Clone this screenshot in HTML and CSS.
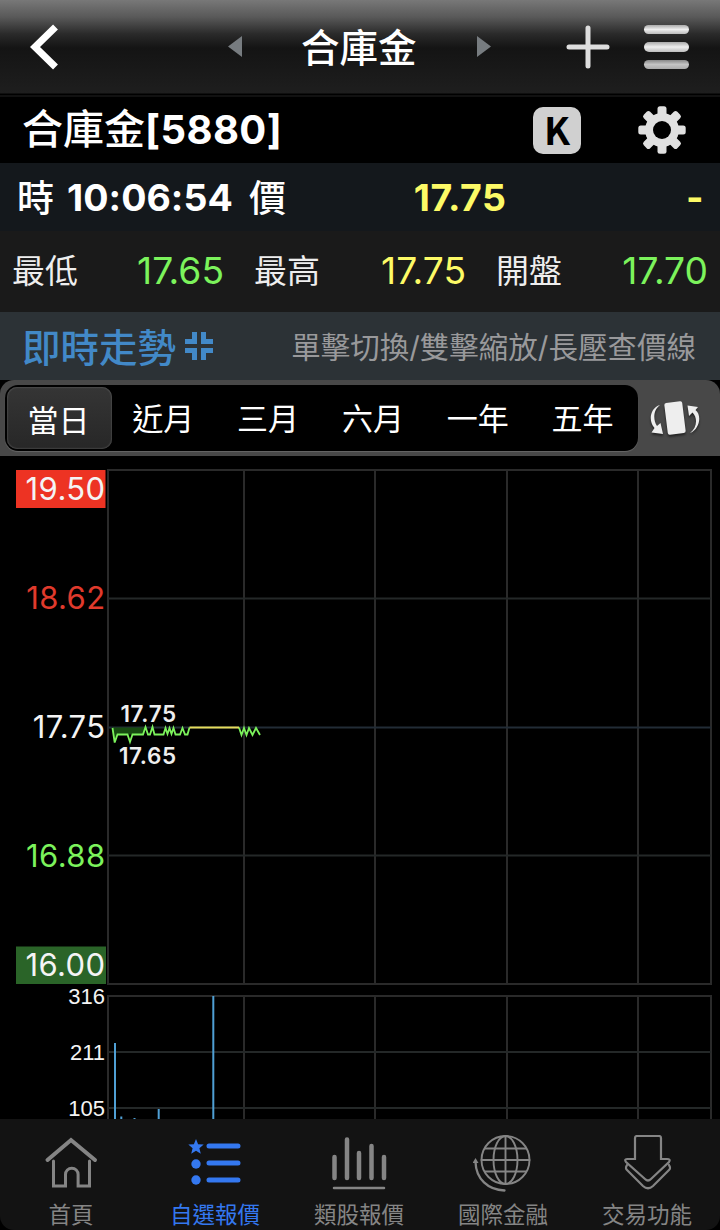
FILE: index.html
```html
<!DOCTYPE html>
<html lang="zh-TW">
  <head>
    <meta charset="UTF-8" />
    <meta name="viewport" content="width=device-width, initial-scale=1.0" />
    <title>合庫金 5880</title>
    <link rel="stylesheet" href="styles.css">
  </head>
  <body>
    <!-- 標題列 -->
    <header class="topbar">
      <svg class="back" width="30" height="46" viewBox="0 0 30 46"><path d="M25.500 3L5 23l20.500 20" /></svg>
      <svg class="arrow arrow-prev" width="14" height="22" viewBox="0 0 14 22"><path d="M14 0v21L0 10.500z" /></svg>
      <h1>合庫金</h1>
      <svg class="arrow arrow-next" width="14" height="22" viewBox="0 0 14 22"><path d="M0 0v21l14-10.500z" /></svg>
      <svg class="plus" width="44" height="44" viewBox="0 0 44 44"><path d="M22 3v38M3 22h38" /></svg>
      <div class="menu"><i></i><i></i><i></i></div>
    </header>

    <!-- 股票名稱 -->
    <div class="stock">
      <h2>合庫金<b>[5880]</b></h2>
      <span class="k-badge">K</span>
      <svg class="gear" width="48" height="48" viewBox="-24 -24 48 48">
        <rect x="-4.500" y="-23.700" width="9" height="47.400" rx="2.500" />
        <rect x="-4.500" y="-23.700" width="9" height="47.400" rx="2.500" transform="rotate(45)" />
        <rect x="-4.500" y="-23.700" width="9" height="47.400" rx="2.500" transform="rotate(90)" />
        <rect x="-4.500" y="-23.700" width="9" height="47.400" rx="2.500" transform="rotate(135)" />
        <circle r="17" />
        <circle class="hole" r="9" />
      </svg>
    </div>

    <!-- 時間與成交價 -->
    <div class="quote">
      <span class="label">時</span>
      <span class="time">10:06:54</span>
      <span class="label">價</span>
      <span class="price">17.75</span>
      <span class="diff">-</span>
    </div>

    <div class="range">
      <span>最低</span><b class="green">17.65</b>
      <span>最高</span><b class="yellow">17.75</b>
      <span>開盤</span><b class="green">17.70</b>
    </div>

    <div class="trend">
      <h3>即時走勢</h3>
      <svg class="shrink" width="28" height="28" viewBox="0 0 28 28"><path d="M9.500 0v9.500H0M18.500 0v9.500H28M9.500 28v-9.500H0M18.500 28v-9.500H28" /></svg>
      <p>單擊切換/雙擊縮放/長壓查價線</p>
    </div>

    <!-- 期間切換 -->
    <div class="period">
      <div class="tabs">
        <span class="tab active">當日</span>
        <span class="tab">近月</span>
        <span class="tab">三月</span>
        <span class="tab">六月</span>
        <span class="tab">一年</span>
        <span class="tab">五年</span>
      </div>
      <svg class="rotate" width="52" height="40" viewBox="0 0 52 40">
        <rect x="17" y="4" width="18" height="32" rx="2" transform="rotate(-7 26 20)" />
        <path d="M11 7C1 10-1 23 5.500 30L2.500 34.500 14 36 11.500 25 8 28C4 22 4 12 11 7z" />
        <path d="M41 35C51 31 53 17 46.500 12L49 9 38.500 7.500 40 18 43.500 14.500C49 20 48 30 41 35z" />
      </svg>
    </div>

    <!-- 走勢圖與成交量 -->
    <svg class="chart" width="720" height="663" viewBox="0 456 720 663">
      <g class="grid">
        <path d="M108 470H711V984H108z" />
        <path d="M244 470v514M375 470v514M507 470v514M638 470v514" />
        <path class="thin" d="M108 598.500h603M108 855.500h603" />
        <path d="M108 1119V996H711v123" />
        <path d="M244 996v123M375 996v123M507 996v123M638 996v123" />
        <path class="thin" d="M108 1052h603M108 1108h603" />
      </g>
      <path class="base" d="M108 727.500H711" />

      <path class="area" d="M112 727.500L114.500 742 117 734.500H144l2-7z" />
      <path class="line" d="M112.500 728L114.700 742.500 117.500 734.500H127.500L130 742 132.500 734.500H143L145.500 727 148 734.500H150L152.500 727 154.500 734.500H163.500L165.500 728 167.500 734 169.500 728 171.500 734 173.500 728 175.500 734.500H180L182.500 728 185 734.500H187.500L189.500 727.500M239 727.500L241.500 735 244 728 246.500 735 249 728 252.500 735 256 728 260 735" />
      <path class="flat" d="M189.500 727.500H239" />

      <path class="bar" d="M115 1119V1043M158.700 1119V1109M213.300 1119V996M121.300 1119v-2.500M134.500 1119v-1" />

      <rect class="limit-up" x="16" y="470" width="89.500" height="38" />
      <rect class="limit-down" x="16" y="946.500" width="90" height="37.500" />
      <g class="axis">
        <text x="105.500" y="500">19.50</text>
        <text class="red" x="105.500" y="609">18.62</text>
        <text x="105.500" y="738">17.75</text>
        <text class="green" x="105.500" y="867">16.88</text>
        <text x="105.500" y="976">16.00</text>
      </g>
      <g class="axis volume-axis">
        <text x="105" y="1004">316</text>
        <text x="105" y="1060">211</text>
        <text x="105" y="1116">105</text>
      </g>
      <g class="mark">
        <text x="120.500" y="722">17.75</text>
        <text x="119" y="763.500">17.65</text>
      </g>
    </svg>

    <!-- 底部選單 -->
    <nav class="nav">
      <a class="item">
        <svg width="60" height="60" viewBox="0 0 60 60"><path d="M6.500 25L30 5l24 20" stroke-width="4" /><path d="M12.500 26v25h12V39.500a6.300 6.300 0 0 1 12.600 0V51H48.500V26" /></svg>
        <span>首頁</span>
      </a>
      <a class="item active">
        <svg width="60" height="60" viewBox="1.500 0 60 60">
          <path class="fill" d="M12.500 4l2.100 5.200 5.600.4-4.300 3.600 1.400 5.500-4.800-3-4.800 3 1.400-5.500L4.800 9.600l5.600-.4z" />
          <circle class="fill" cx="12.500" cy="29" r="4.700" /><circle class="fill" cx="12.500" cy="45" r="4.700" />
          <path stroke-width="5" d="M25.500 11h29M25.500 28h29M25.500 45h29" />
        </svg>
        <span>自選報價</span>
      </a>
      <a class="item">
        <svg width="60" height="60" viewBox="0 0 60 60"><path stroke-width="4.500" d="M5.500 22v21M18 4.500V43M30 18v25M42.500 11v32M55 22v21" /><path stroke-width="2.500" d="M5 53h50" /></svg>
        <span>類股報價</span>
      </a>
      <a class="item">
        <svg width="60" height="60" viewBox="0 0 60 60">
          <g stroke-width="1.900"><circle cx="32.500" cy="25" r="24" /><ellipse cx="32.500" cy="25" rx="12" ry="24" /><path d="M32.500 1v48M8.500 25h48M12 13.500h41M12 36.500h41" /></g>
          <path d="M2.500 27C3 44 15 55 31.500 55.500" stroke-width="2.300" /><path class="fill" d="M2.500 23l3 5h-6z" />
        </svg>
        <span>國際金融</span>
      </a>
      <a class="item">
        <svg width="60" height="60" viewBox="0 0 60 60"><path stroke-width="2.200" d="M20 1H42q2 0 2 2V24h6q4 0 2 3L34 44q-3 3-6 0L9 27q-2-3 1-3h8V3q0-2 2-2z" /><path stroke-width="2.200" d="M10 30q-2 3 0 5l16 16q5 4.500 10 0l16-16q2-2 0-5" /></svg>
        <span>交易功能</span>
      </a>
    </nav>
  </body>
</html>
```
FILE: styles.css
```css
* {
  box-sizing: border-box;
}
body {
  margin: 0;
  width: 720px;
  height: 1230px;
  overflow: hidden;
  background-color: #000;
  color: #fff;
  font-family: Inter, "Noto Sans CJK TC", sans-serif;
}
h1,
h2,
h3,
p {
  margin: 0;
  white-space: nowrap;
}
svg {
  display: block;
  flex: none;
}

/* 標題列 */
.topbar {
  display: flex;
  align-items: center;
  height: 97px;
  padding: 0 31px 3px 30px;
  background: linear-gradient(#787878 0, #595959 17px, #2a2a2a 34px, #141414 48px, #1e1e1e 93px, #000 94px, #000 95px, #222 96px, #000 97px);
}
.back path {
  fill: none;
  stroke: #fff;
  stroke-width: 7;
}
.arrow path {
  fill: #777c80;
}
.arrow-prev {
  margin-left: 168px;
}
.topbar h1 {
  width: 120px;
  margin: 0 56px 0 59px;
  padding-top: 1px;
  font-size: 38.500px;
  font-weight: 500;
  line-height: 60px;
}
.plus {
  margin-left: 75px;
}
.plus path {
  stroke: #dedede;
  stroke-width: 5;
  stroke-linecap: round;
}
.menu {
  display: flex;
  flex-direction: column;
  gap: 8px;
  width: 45px;
  margin-left: auto;
}
.menu i {
  height: 9.500px;
  border-radius: 5px;
  background: linear-gradient(#aaa, #eee 50%, #bbb);
}
.menu i:last-child {
  background: linear-gradient(#888, #c4c4c4 50%, #aaa);
}

/* 股票名稱 */
.stock {
  display: flex;
  align-items: center;
  height: 66px;
  padding: 0 34px 0 22px;
}
.stock h2 {
  width: 511px;
  padding-bottom: 8px;
  font-size: 41px;
  font-weight: 500;
}
.stock b {
  font-size: 40px;
  font-weight: 650;
  letter-spacing: 0.400px;
}
.k-badge {
  width: 48px;
  height: 47px;
  border-radius: 10px;
  background-color: #d0d0d0;
  color: #000;
  font: bold 38px/44px "Noto Sans CJK TC", sans-serif;
  text-align: center;
}
.gear {
  margin-left: auto;
  fill: #e0e0e0;
}
.gear .hole {
  fill: #000;
}

/* 時間與成交價 */
.quote {
  display: flex;
  align-items: center;
  height: 68px;
  padding: 0 16px 0 17px;
  background-color: #14181c;
  font-size: 37.500px;
  font-weight: 650;
  letter-spacing: 0.500px;
}
.quote .label {
  width: 50px;
  padding-bottom: 2px;
  font-size: 37px;
  font-weight: 500;
  letter-spacing: 0;
}
.quote .time {
  width: 182px;
  letter-spacing: 0.050px;
}
.quote .price {
  width: 207.500px;
  text-align: right;
}
.price,
.diff,
.yellow {
  color: #fdfa66;
}
.diff {
  margin-left: auto;
}
.range {
  display: flex;
  align-items: center;
  height: 81px;
  padding: 0 12px 3px;
  background-color: #1a1a1a;
}
.range span {
  width: 70px;
  padding-bottom: 2px;
  font-size: 33px;
  color: #eee;
}
.range b {
  width: 142px;
  margin-right: 30px;
  font-size: 37.200px;
  font-weight: 400;
  text-align: right;
}
.range b:last-child {
  margin-right: 0;
}
.green {
  color: #7cf35c;
}

.trend {
  display: flex;
  align-items: center;
  height: 68px;
  padding: 0 24px 0 22px;
  background-color: #2c3236;
}
.trend h3 {
  padding-bottom: 3px;
  font-size: 38.500px;
  font-weight: 500;
  color: #4289c8;
}
.shrink {
  margin-left: 9px;
}
.shrink path {
  fill: none;
  stroke: #4289c8;
  stroke-width: 5;
}
.trend p {
  margin-left: auto;
  padding-bottom: 3px;
  font-size: 29.500px;
  color: #99999b;
}

/* 期間切換 */
.period {
  display: flex;
  align-items: center;
  height: 76px;
  padding: 0 19px 0 5px;
  border-radius: 14px 14px 0 0;
  background-color: #484848;
}
.tabs {
  display: flex;
  width: 633px;
  height: 66px;
  padding: 2px;
  border-radius: 13px;
  background-color: #000;
  box-shadow: 0 1px 1px #666;
}
.tab {
  width: 105px;
  padding-right: 2px;
  font-size: 31px;
  line-height: 63px;
  text-align: center;
}
.tab.active {
  height: 62px;
  border-radius: 10px;
  background: linear-gradient(#353535, #272727);
  line-height: 67px;
  box-shadow: inset 0 0 2px #777;
}
.rotate {
  margin-left: auto;
  fill: #eee;
  filter: drop-shadow(0 2px 1px #222);
}

/* 走勢圖 */
.chart {
  overflow: visible;
}
.chart path {
  fill: none;
}
.grid {
  stroke: #2a2a2a;
  stroke-width: 2;
}
.grid .thin {
  stroke: #242828;
}
.chart .base {
  stroke: #222c36;
  stroke-width: 2;
}
.chart .area {
  fill: #164a10;
}
.line {
  stroke: #7cf35c;
  stroke-width: 1.800;
}
.flat {
  stroke: #e6dc5c;
  stroke-width: 1.800;
}
.bar {
  stroke: #4f9fd4;
  stroke-width: 2;
}
.limit-up {
  fill: #ed3323;
}
.limit-down {
  fill: #2a6428;
}
.axis {
  fill: #f4f4f4;
  font-size: 31px;
  letter-spacing: 0.400px;
  text-anchor: end;
}
.axis .red {
  fill: #e03a2c;
}
.axis .green {
  fill: #7cf35c;
}
.volume-axis {
  font-family: "Liberation Sans", sans-serif;
  font-size: 22px;
  letter-spacing: 0;
}
.mark {
  fill: #eee;
  font-size: 22.500px;
  font-weight: 600;
  letter-spacing: 0.600px;
}

/* 底部選單 */
.nav {
  display: flex;
  height: 111px;
  border-radius: 0 0 14px 14px;
  background-color: #131313;
}
.item {
  display: flex;
  flex-direction: column;
  align-items: center;
  width: 144px;
  padding: 16px 2px 0 0;
  color: #858585;
}
.item svg {
  fill: none;
  stroke: currentColor;
  stroke-width: 3;
  stroke-linecap: round;
}
.item .fill {
  fill: currentColor;
  stroke: none;
}
.item span {
  margin-top: 5px;
  font-size: 22.500px;
  line-height: 30px;
}
.item.active {
  color: #3478f0;
}
```
